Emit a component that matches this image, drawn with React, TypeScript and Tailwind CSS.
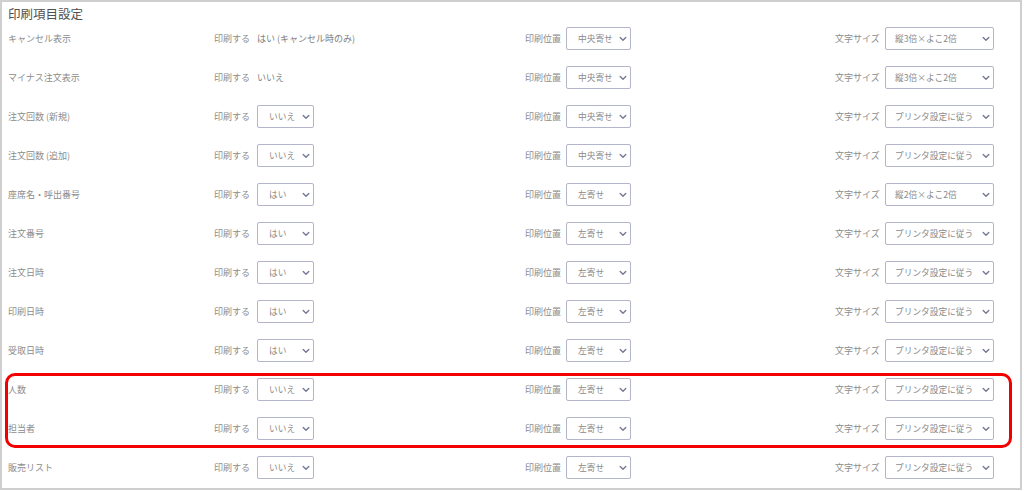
import React from "react";

type Row = {
	label: string;
	print: string | string[];
	align: string;
	size: string;
};

const rows: Row[] = [
	{ label: "キャンセル表示", print: "はい (キャンセル時のみ)", align: "中央寄せ", size: "縦3倍×よこ2倍" },
	{ label: "マイナス注文表示", print: "いいえ", align: "中央寄せ", size: "縦3倍×よこ2倍" },
	{ label: "注文回数 (新規)", print: ["いいえ"], align: "中央寄せ", size: "プリンタ設定に従う" },
	{ label: "注文回数 (追加)", print: ["いいえ"], align: "中央寄せ", size: "プリンタ設定に従う" },
	{ label: "座席名・呼出番号", print: ["はい"], align: "左寄せ", size: "縦2倍×よこ2倍" },
	{ label: "注文番号", print: ["はい"], align: "左寄せ", size: "プリンタ設定に従う" },
	{ label: "注文日時", print: ["はい"], align: "左寄せ", size: "プリンタ設定に従う" },
	{ label: "印刷日時", print: ["はい"], align: "左寄せ", size: "プリンタ設定に従う" },
	{ label: "受取日時", print: ["はい"], align: "左寄せ", size: "プリンタ設定に従う" },
	{ label: "人数", print: ["いいえ"], align: "左寄せ", size: "プリンタ設定に従う" },
	{ label: "担当者", print: ["いいえ"], align: "左寄せ", size: "プリンタ設定に従う" },
	{ label: "販売リスト", print: ["いいえ"], align: "左寄せ", size: "プリンタ設定に従う" },
];

function Chevron() {
	return (
		<svg width="8" height="6" viewBox="0 0 8 6" className="block">
			<path
				d="M1.2 1.4 L4 4.2 L6.8 1.4"
				fill="none"
				stroke="#767a94"
				strokeWidth="1.4"
				strokeLinecap="round"
				strokeLinejoin="round"
			/>
		</svg>
	);
}

function Select({
	value,
	width,
	padLeft,
}: {
	value: string;
	width: string;
	padLeft: string;
}) {
	return (
		<div className={`relative h-[23px] ${width}`}>
			<select
				defaultValue={value}
				className={`h-full w-full appearance-none rounded-[2px] border border-[#b3b5cb] bg-white ${padLeft} text-[8.7px] leading-[21px] text-[#8a8a8a] outline-none`}
			>
				<option value={value}>{value}</option>
			</select>
			<span className="pointer-events-none absolute right-[4px] top-[9px]">
				<Chevron />
			</span>
		</div>
	);
}

export default function App() {
	return (
		<div
			className="relative h-[491px] w-[1024px] bg-white"
			style={{ fontFamily: '"Noto Sans CJK JP", "Noto Sans", sans-serif' }}
		>
			<div className="h-[490px] w-[1022px] border-2 border-[#cfcfcf] pl-[6px]">
				<div className="h-[17px] pt-[6px] text-[12.5px] leading-[12px] text-[#505050]">
					印刷項目設定
				</div>
				{rows.map((r) => (
					<div key={r.label} className="flex h-[39px] items-center text-[9px] text-[#8c8c8c]">
						<div className="w-[206px]">{r.label}</div>
						<div className="w-[42px]">印刷する</div>
						<div className="w-[269px]">
							<div className="pl-[1px] text-[#808080]">
								{typeof r.print === "string" ? (
									r.print
								) : (
									<Select value={r.print[0]} width="w-[57px]" padLeft="pl-[11px]" />
								)}
							</div>
						</div>
						<div className="w-[41px]">印刷位置</div>
						<div className="w-[269px]">
							<Select value={r.align} width="w-[65px]" padLeft="pl-[11px]" />
						</div>
						<div className="w-[50px]">文字サイズ</div>
						<Select value={r.size} width="w-[109px]" padLeft="pl-[9px]" />
					</div>
				))}
			</div>
			<div className="pointer-events-none absolute left-[5px] top-[373px] h-[75px] w-[1007px] rounded-[10px] border-[3px] border-[#f20000]" />
		</div>
	);
}
